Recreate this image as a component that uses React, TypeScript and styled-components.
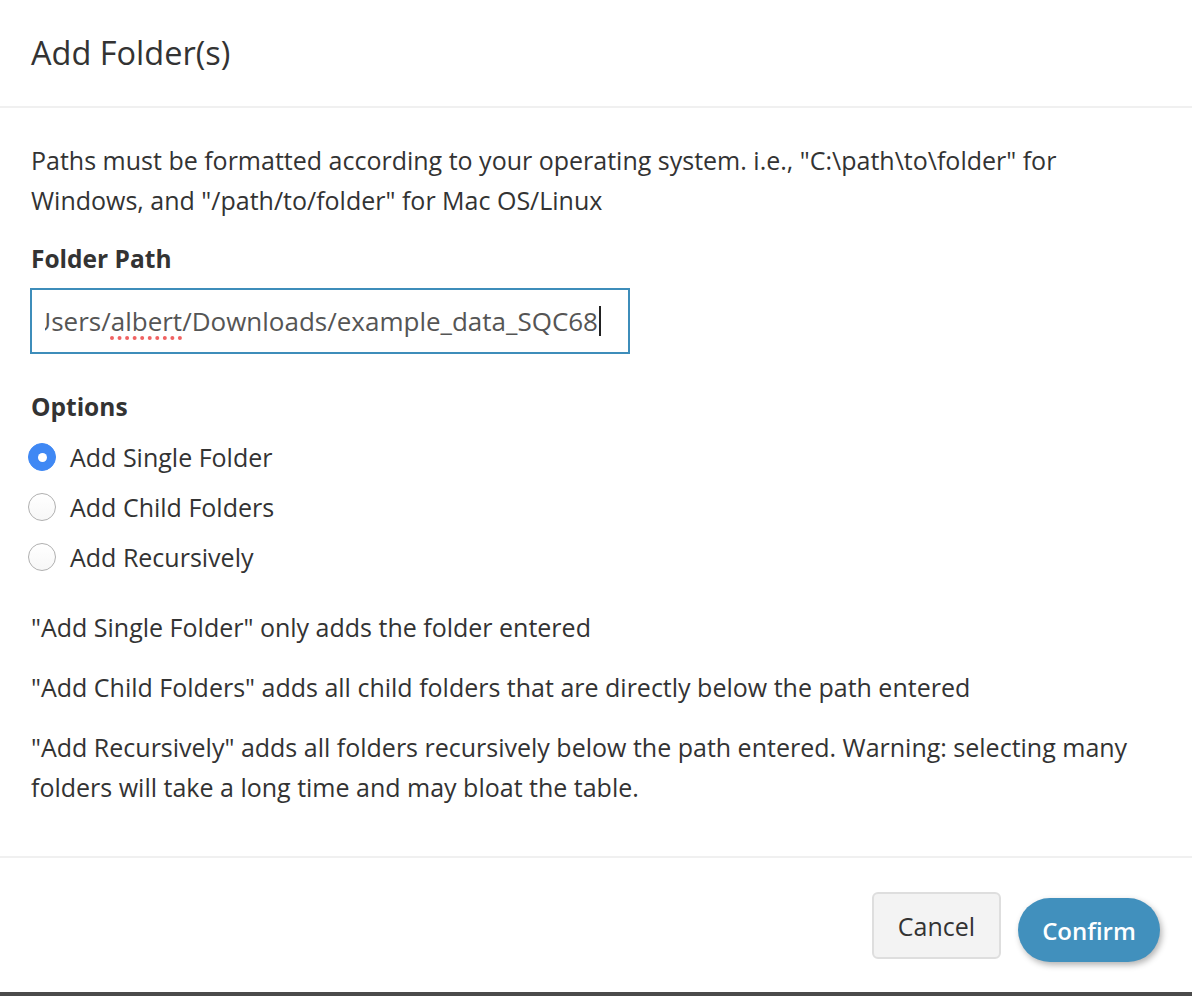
import React, { useState } from "react";
import styled, { createGlobalStyle } from "styled-components";

const GlobalStyle = createGlobalStyle`
    html, body {
        margin: 0;
        padding: 0;
        background: #ffffff;
    }
    * {
        box-sizing: border-box;
    }
`

const options = [
    { id: "single", label: "Add Single Folder" },
    { id: "child", label: "Add Child Folders" },
    { id: "recursive", label: "Add Recursively" },
];

export default function App() {
    const [mode, setMode] = useState("single");

    return (
        <>
            <GlobalStyle />
            <Modal>
                <Header>
                    <Title>Add Folder(s)</Title>
                </Header>
                <Body>
                    <Text>
                        Paths must be formatted according to your operating system. i.e., "C:\path\to\folder" for
                        Windows, and "/path/to/folder" for Mac OS/Linux
                    </Text>
                    <Label>Folder Path</Label>
                    <PathInput role="textbox">
                        <PathClip>
                            <PathValue>
                                /Users/<Misspelled>albert</Misspelled>/Downloads/example_data_SQC68
                                <Caret />
                            </PathValue>
                        </PathClip>
                    </PathInput>
                    <Label $top={33}>Options</Label>
                    <RadioList>
                        {options.map((o) => (
                            <RadioRow key={o.id}>
                                <Radio
                                    type="radio"
                                    name="mode"
                                    checked={mode === o.id}
                                    onChange={() => setMode(o.id)}
                                />
                                {o.label}
                            </RadioRow>
                        ))}
                    </RadioList>
                    <Notes>
                        <Text>"Add Single Folder" only adds the folder entered</Text>
                        <Text>"Add Child Folders" adds all child folders that are directly below the path entered</Text>
                        <Text>
                            "Add Recursively" adds all folders recursively below the path entered. Warning: selecting many
                            folders will take a long time and may bloat the table.
                        </Text>
                    </Notes>
                </Body>
                <Footer>
                    <CancelButton>Cancel</CancelButton>
                    <ConfirmButton>Confirm</ConfirmButton>
                </Footer>
            </Modal>
        </>
    );
}

const Modal = styled.div`
    display: flex;
    flex-direction: column;
    height: 100vh;
    background: #fff;
    border-bottom: 4px solid #4b4b4b;
    font-family: "Open Sans", "Noto Sans", sans-serif;
    color: #333;
`
const Header = styled.header`
    height: 108px;
    padding: 0 31px;
    display: flex;
    align-items: center;
    border-bottom: 2px solid #f0f0f0;
`
const Title = styled.h1`
    margin: 0;
    font-size: 32.5px;
    font-weight: 400;
    line-height: 44px;
    color: #333;
`
const Body = styled.main`
    flex: 1;
    padding: 32px 22px 0 31px;
`
const Text = styled.p`
    margin: 0;
    font-size: 25px;
    line-height: 40px;
`
const Label = styled.div<{ $top?: number }>`
    margin-top: ${({ $top }) => $top ?? 19}px;
    font-size: 24.5px;
    font-weight: 700;
    line-height: 40px;
`
const PathInput = styled.div`
    margin-top: 9px;
    margin-left: -1px;
    width: 600px;
    height: 66px;
    border: 2px solid #3d8dba;
    padding: 0 27px 0 13px;
    display: flex;
    align-items: center;
    background: #fff;
`
const PathClip = styled.div`
    flex: 1;
    height: 100%;
    display: flex;
    align-items: center;
    justify-content: flex-end;
    overflow: hidden;
`
const PathValue = styled.span`
    display: flex;
    align-items: center;
    white-space: nowrap;
    font-size: 26px;
    color: #555;
    flex-shrink: 0;
`
const Misspelled = styled.span`
    text-decoration: underline dotted #f06262;
    text-decoration-thickness: 4px;
    text-underline-offset: 5px;
`
const Caret = styled.span`
    display: inline-block;
    width: 2px;
    height: 30px;
    margin-left: 1px;
    background: #222;
`
const RadioList = styled.div`
    margin-top: 5px;
    display: flex;
    flex-direction: column;
`
const RadioRow = styled.label`
    height: 50px;
    display: flex;
    align-items: center;
    gap: 14px;
    margin-left: -3px;
    font-size: 25px;
    cursor: pointer;
`
const Radio = styled.input`
    appearance: none;
    margin: 0;
    width: 28px;
    height: 28px;
    border-radius: 50%;
    border: 1px solid #b0b0b0;
    background: linear-gradient(#ffffff, #f7f7f7);
    display: grid;
    place-items: center;
    flex-shrink: 0;

    &:checked {
        border-color: #3f88f4;
        background: #3f88f4;
    }
    &:checked::after {
        content: "";
        width: 9px;
        height: 9px;
        border-radius: 50%;
        background: #fff;
    }
`
const Notes = styled.div`
    margin-top: 25px;
    display: flex;
    flex-direction: column;
    gap: 20px;
`
const Footer = styled.footer`
    height: 136px;
    border-top: 2px solid #f0f0f0;
    padding: 34px 32px 0 0;
    display: flex;
    justify-content: flex-end;
    align-items: flex-start;
    gap: 17px;
`
const CancelButton = styled.button`
    height: 67px;
    width: 129px;
    font-family: inherit;
    font-size: 25px;
    color: #333;
    background: #f3f3f3;
    border: 2px solid #dedede;
    border-radius: 6px;
    cursor: pointer;
`
const ConfirmButton = styled.button`
    margin-top: 6px;
    height: 64px;
    width: 142px;
    font-family: inherit;
    font-size: 24px;
    font-weight: 600;
    color: #fff;
    background: #4190bd;
    border: none;
    border-radius: 32px;
    box-shadow: 2px 3px 6px rgba(0, 0, 0, 0.3);
    cursor: pointer;
`
